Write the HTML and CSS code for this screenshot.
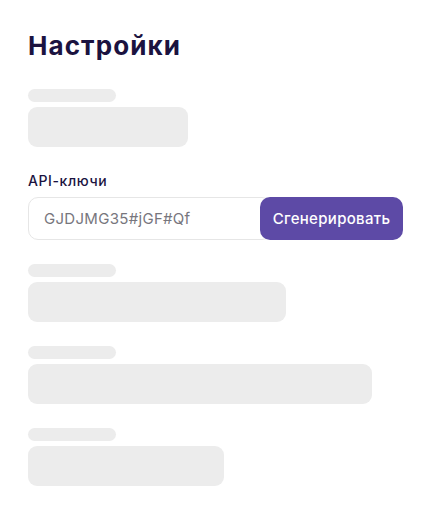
FILE: index.html
```html
<!DOCTYPE html>
<html lang="ru">
<head>
<meta charset="utf-8">
<title>Настройки</title>
<link rel="stylesheet" href="styles.css">
</head>
<body>
<main class="page">
  <h1 class="title">Настройки</h1>
  <div class="field">
    <div class="sk-label"></div>
    <div class="sk-box w160"></div>
  </div>
  <div class="field api">
    <label class="label" for="key">API-ключи</label>
    <div class="key-row">
      <input id="key" class="key-input" type="text" value="GJDJMG35#jGF#Qf" readonly>
      <button class="gen-btn" type="button">Сгенерировать</button>
    </div>
  </div>
  <div class="field">
    <div class="sk-label"></div>
    <div class="sk-box w258"></div>
  </div>
  <div class="field">
    <div class="sk-label"></div>
    <div class="sk-box w344"></div>
  </div>
  <div class="field">
    <div class="sk-label"></div>
    <div class="sk-box w196"></div>
  </div>
</main>
</body>
</html>
```

FILE: styles.css
```css
* { box-sizing: border-box; }
html, body { margin: 0; background: #fff; }
body { font-family: Inter, "Noto Sans", sans-serif; }
.page {
  padding: 28px 28px 0 28px;
  display: flex;
  flex-direction: column;
  gap: 24px;
}
.title {
  margin: 0 0 1px 0;
  font-size: 26px;
  line-height: 36px;
  font-weight: 700;
  color: #1b1340;
  letter-spacing: 1.1px;
}
.field { display: flex; flex-direction: column; gap: 5px; }
.sk-label { width: 88px; height: 13px; border-radius: 7px; background: #ececec; }
.sk-box { height: 40px; border-radius: 9px; background: #ececec; }
.w160 { width: 160px; }
.w258 { width: 258px; }
.w344 { width: 344px; }
.w196 { width: 196px; }
.api { gap: 6px; }
.label {
  font-size: 14px;
  line-height: 20px;
  font-weight: 500;
  color: #1b1340;
  letter-spacing: 0.6px;
}
.key-row { display: flex; width: 375px; }
.key-input {
  flex: 1;
  min-width: 0;
  height: 43px;
  margin-right: -12px;
  padding: 0 15px;
  border: 1.5px solid #e6e6e6;
  border-radius: 10px;
  font-family: Inter, "Noto Sans", sans-serif;
  font-size: 15px;
  letter-spacing: 0.3px;
  color: #77767d;
  background: #fff;
  outline: none;
}
.gen-btn {
  position: relative;
  width: 143px;
  height: 43px;
  border: 0;
  border-radius: 10px;
  background: #5d4aa6;
  color: #fff;
  font-family: Inter, "Noto Sans", sans-serif;
  font-size: 15px;
  font-weight: 500;
  letter-spacing: 0.3px;
  padding: 0;
}
```
